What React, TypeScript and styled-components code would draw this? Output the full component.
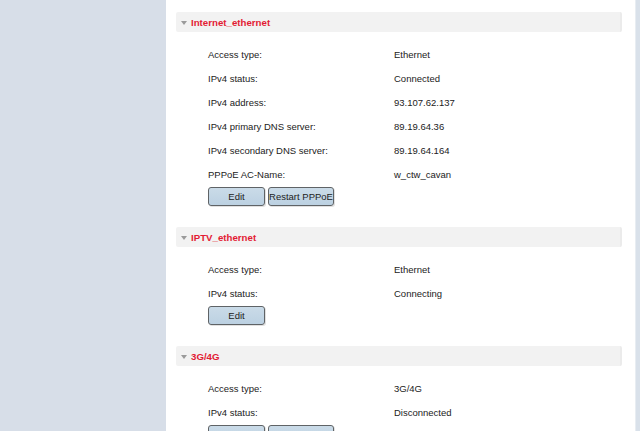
import React from 'react'
import styled, { createGlobalStyle } from 'styled-components'

const GlobalStyle = createGlobalStyle`
  html, body {
    margin: 0;
    padding: 0;
    background: #fff;
  }
  body {
    font-family: "Liberation Sans", Arial, Helvetica, sans-serif;
    font-size: 9.5px;
    color: #222;
  }
`

const Page = styled.div`
  display: flex;
  height: 431px;
  overflow: hidden;
`

const Sidebar = styled.div`
  width: 166px;
  flex-shrink: 0;
  background: #d7dee8;
`

const Main = styled.div`
  flex: 1;
  padding: 12px 13px 0 10px;
  background: #fff;
`

const Edge = styled.div`
  width: 4px;
  flex-shrink: 0;
  background: #d9e1ea;
  border-left: 1px solid #e8edf2;
`

const Section = styled.section`
  margin-bottom: 21px;
`

const Header = styled.div`
  display: flex;
  align-items: center;
  height: 20px;
  padding-left: 5px;
  background: #f2f2f2;
  border-radius: 2px;
  border-right: 2px solid #ebebeb;
`

const Caret = styled.span`
  width: 0;
  height: 0;
  border-left: 3.5px solid transparent;
  border-right: 3.5px solid transparent;
  border-top: 4px solid #9a9a9a;
  margin-right: 4px;
  margin-top: 1px;
`

const Title = styled.h3`
  margin: 0;
  font-size: 9.7px;
  font-weight: bold;
  color: #e31b34;
`

const Body = styled.div`
  padding: 10px 0 0 32px;
`

const Row = styled.div`
  display: grid;
  grid-template-columns: 186px 1fr;
  height: 24px;
  align-items: center;
`

const Actions = styled.div`
  display: flex;
  gap: 3px;
  margin-top: 1px;
`

const Button = styled.button<{ $width: number }>`
  width: ${(p) => p.$width}px;
  height: 19px;
  padding: 0;
  font-family: inherit;
  font-size: 9.5px;
  color: #222;
  background: linear-gradient(#cadbe8, #bcd1e2);
  border: 1px solid #5f6366;
  border-radius: 3px;
  box-shadow: 1px 1px 0 rgba(0, 0, 0, 0.12);
`

type Item = [string, string]

interface Conn {
  name: string
  rows: Item[]
  buttons: [string, number][]
}

const connections: Conn[] = [
  {
    name: 'Internet_ethernet',
    rows: [
      ['Access type:', 'Ethernet'],
      ['IPv4 status:', 'Connected'],
      ['IPv4 address:', '93.107.62.137'],
      ['IPv4 primary DNS server:', '89.19.64.36'],
      ['IPv4 secondary DNS server:', '89.19.64.164'],
      ['PPPoE AC-Name:', 'w_ctw_cavan'],
    ],
    buttons: [
      ['Edit', 57],
      ['Restart PPPoE', 66],
    ],
  },
  {
    name: 'IPTV_ethernet',
    rows: [
      ['Access type:', 'Ethernet'],
      ['IPv4 status:', 'Connecting'],
    ],
    buttons: [['Edit', 57]],
  },
  {
    name: '3G/4G',
    rows: [
      ['Access type:', '3G/4G'],
      ['IPv4 status:', 'Disconnected'],
    ],
    buttons: [
      ['Edit', 57],
      ['Connect', 66],
    ],
  },
]

export default function App() {
  return (
    <>
      <GlobalStyle />
      <Page>
        <Sidebar />
        <Main>
          {connections.map((c) => (
            <Section key={c.name}>
              <Header>
                <Caret />
                <Title>{c.name}</Title>
              </Header>
              <Body>
                {c.rows.map(([label, value]) => (
                  <Row key={label}>
                    <span>{label}</span>
                    <span>{value}</span>
                  </Row>
                ))}
                <Actions>
                  {c.buttons.map(([text, w]) => (
                    <Button key={text} $width={w}>
                      {text}
                    </Button>
                  ))}
                </Actions>
              </Body>
            </Section>
          ))}
        </Main>
        <Edge />
      </Page>
    </>
  )
}
